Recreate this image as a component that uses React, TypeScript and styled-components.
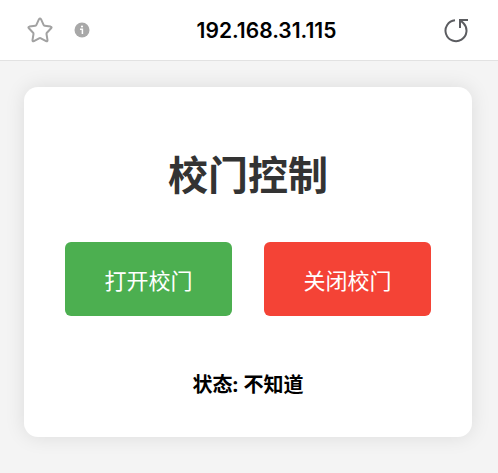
import React from "react";
import styled, { createGlobalStyle } from "styled-components";

const GlobalStyle = createGlobalStyle`
  * { box-sizing: border-box; }
  body { margin: 0; background: #f4f4f4; font-family: "Noto Sans", "Noto Sans CJK SC", sans-serif; color: #000; }
`;

const AddressBar = styled.header`
  display: flex;
  align-items: center;
  height: 61px;
  padding: 0 29px 0 26px;
  background: #fff;
  border-bottom: 1px solid #e2e2e2;
`;

const Tools = styled.div`
  display: flex;
  align-items: center;
  gap: 20px;
`;

const IconButton = styled.button`
  display: flex;
  padding: 0;
  border: 0;
  background: none;
  cursor: pointer;
`;

const Address = styled.span`
  flex: 1;
  padding-top: 2px;
  text-align: center;
  font-family: Inter, sans-serif;
  font-size: 21px;
  line-height: 28px;
  font-weight: 600;
`;

const Page = styled.main`
  padding: 26px 26px 36px 24px;
`;

const Card = styled.section`
  display: flex;
  flex-direction: column;
  align-items: center;
  padding: 58px 41px 36px;
  border-radius: 14px;
  background: #fff;
  box-shadow: 0 0 20px rgba(0, 0, 0, 0.1);
`;

const Title = styled.h1`
  margin: 0;
  font-size: 40px;
  line-height: 60px;
  font-weight: 700;
  color: #333;
`;

const Actions = styled.div`
  display: grid;
  grid-template-columns: 1fr 1fr;
  gap: 32px;
  width: 100%;
  margin-top: 37px;
`;

const GateButton = styled.button<{ $color: string }>`
  height: 74px;
  padding: 0;
  border: 0;
  border-radius: 6px;
  background: ${(p) => p.$color};
  color: #fff;
  font-family: "Noto Sans CJK SC", sans-serif;
  font-size: 22px;
  line-height: 32px;
  font-weight: 400;
  cursor: pointer;
`;

const Status = styled.p`
  margin: 53px 0 0;
  font-size: 20px;
  line-height: 32px;
  font-weight: 700;
`;

export default function App() {
  return (
    <>
      <GlobalStyle />
      <AddressBar>
        <Tools>
          <IconButton aria-label="收藏">
            <svg width="28" height="28" viewBox="0 0 28 28" fill="none" stroke="#a2a2a2" strokeWidth="2" strokeLinejoin="round">
              <path d="M13 3.200Q14 1.600 15 3.200L17.600 8.800Q17.900 9.600 18.700 9.700L24.600 10.600Q26.300 11 25.100 12.300L20.900 16.700Q20.400 17.300 20.500 18L21.500 24.100Q21.600 25.800 20.100 25.100L14.900 22.300Q14 21.800 13.100 22.300L7.900 25.100Q6.400 25.800 6.500 24.100L7.500 18Q7.600 17.300 7.100 16.700L2.900 12.300Q1.700 11 3.400 10.600L9.300 9.700Q10.100 9.600 10.400 8.800Z" />
            </svg>
          </IconButton>
          <IconButton aria-label="网站信息">
            <svg width="16" height="16" viewBox="0 0 16 16">
              <circle cx="8" cy="8" r="7.500" fill="#a8a8a8" />
              <circle cx="8" cy="4.500" r="1.100" fill="#fff" />
              <path d="M6 7.300H8.400V12" fill="none" stroke="#fff" strokeWidth="1.500" />
            </svg>
          </IconButton>
        </Tools>
        <Address>192.168.31.115</Address>
        <Tools>
          <IconButton aria-label="刷新">
            <svg width="26" height="26" viewBox="0 0 26 26" fill="none" stroke="#5b5c60" strokeWidth="2">
              <path d="M12 3.200A10.500 10.500 0 1 0 20.500 6.300L17 3" />
              <path d="M17 11V3h8" />
            </svg>
          </IconButton>
        </Tools>
      </AddressBar>
      <Page>
        <Card>
          <Title>校门控制</Title>
          <Actions>
            <GateButton $color="#4caf50">打开校门</GateButton>
            <GateButton $color="#f44336">关闭校门</GateButton>
          </Actions>
          <Status>状态: 不知道</Status>
        </Card>
      </Page>
    </>
  );
}
